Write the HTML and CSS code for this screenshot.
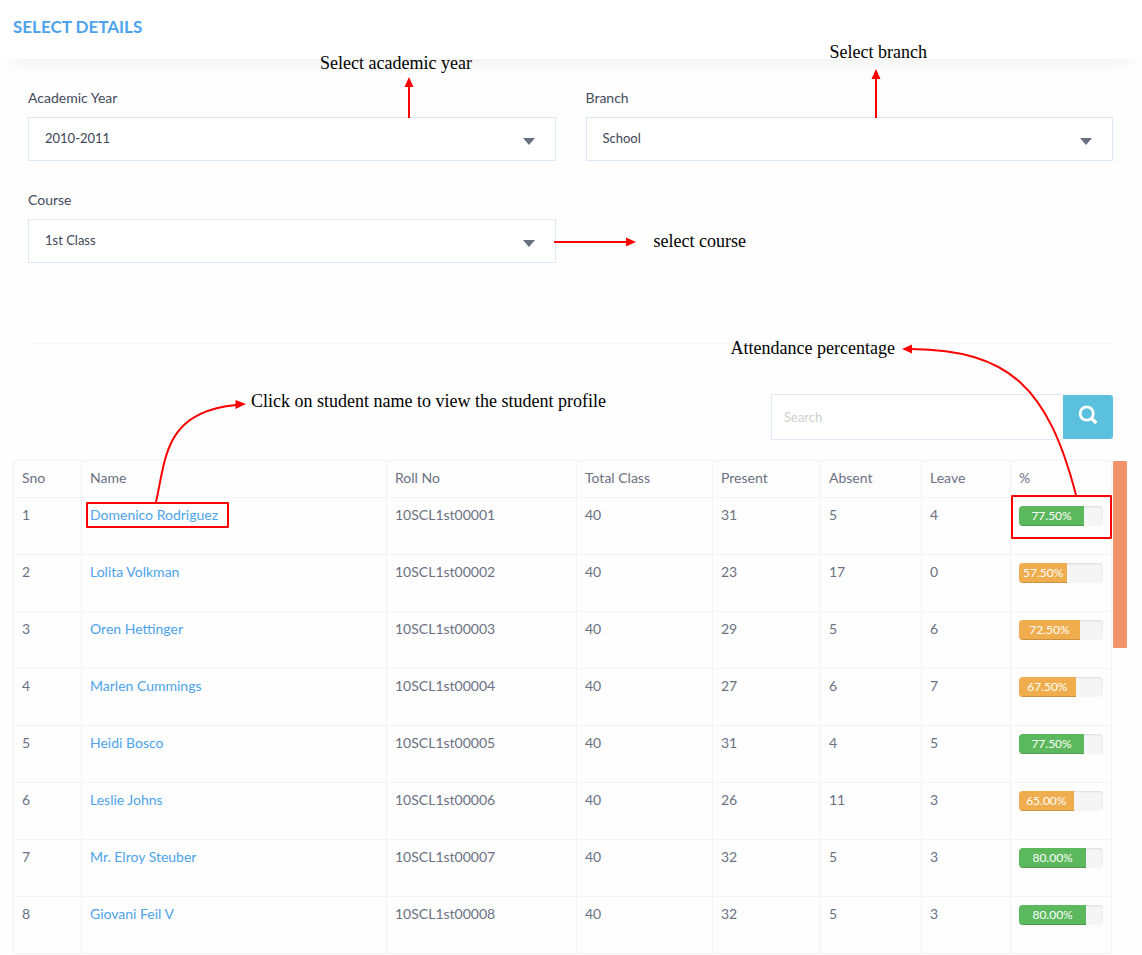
FILE: index.html
```html
<!DOCTYPE html>
<html lang="en">
<head>
<meta charset="utf-8">
<title>Select Details</title>
<link rel="stylesheet" href="styles.css">
</head>
<body>
<header class="page-header"><h1 class="page-title">SELECT DETAILS</h1></header>
<main>
<form class="filters">
  <div class="field">
    <label for="year">Academic Year</label>
    <div class="select-box">
      <select id="year"><option>2010-2011</option></select>
      <span class="note note-year">Select academic year</span>
      <svg class="arrow arrow-year" width="10" height="41" viewBox="0 0 10 41"><path d="M5 41V9" class="stroke"/><path d="M5 0L9.500 10H.5z" class="head"/></svg>
    </div>
  </div>
  <div class="field">
    <label for="branch">Branch</label>
    <div class="select-box">
      <select id="branch"><option>School</option></select>
      <span class="note note-branch">Select branch</span>
      <svg class="arrow arrow-branch" width="10" height="49" viewBox="0 0 10 49"><path d="M5 49V9" class="stroke"/><path d="M5 0L9.500 10H.5z" class="head"/></svg>
    </div>
  </div>
  <div class="field">
    <label for="course">Course</label>
    <div class="select-box">
      <select id="course"><option>1st Class</option></select>
      <span class="note note-course">select course</span>
      <svg class="arrow arrow-course" width="82" height="10" viewBox="0 0 82 10"><path d="M0 5H73" class="stroke"/><path d="M82 5L72 .5V9.500z" class="head"/></svg>
    </div>
  </div>
</form>
<hr class="divider">
<form class="search">
  <input type="search" placeholder="Search" aria-label="Search">
  <button type="button" aria-label="Search"><svg width="20" height="20" viewBox="0 0 20 20"><circle cx="8.700" cy="8.500" r="6.600" fill="none" stroke="#fff" stroke-width="2.800"/><path d="M13.300 13.200L18.300 18" stroke="#fff" stroke-width="3.400"/></svg></button>
</form>
<div class="results">
<table class="attendance">
<colgroup><col class="c-sno"><col><col class="c-roll"><col class="c-total"><col class="c-present"><col class="c-absent"><col class="c-leave"><col class="c-percent"></colgroup>
<thead><tr><th>Sno</th><th>Name</th><th>Roll No</th><th>Total Class</th><th>Present</th><th>Absent</th><th>Leave</th><th>%</th></tr></thead>
<tbody>
<tr><td>1</td><td><div class="anchor"><a href="#s1">Domenico Rodriguez</a><span class="frame frame-name"></span><svg class="arrow arrow-name" width="96" height="104" viewBox="150 398 96 104"><path d="M156 502C166 458 164 412 236 405" class="stroke"/><path d="M246 404L235.500 400V409z" class="head"/></svg><span class="note note-name">Click on student name to view the student profile</span></div></td><td>10SCL1st00001</td><td>40</td><td>31</td><td>5</td><td>4</td><td><div class="anchor"><div class="progress"><div class="bar good" style="width:77.5%">77.50%</div></div><span class="frame frame-percent"></span><svg class="arrow arrow-percent" width="178" height="155" viewBox="902 340 178 155"><path d="M1076 495C1048 388 1010 350 911 349" class="stroke"/><path d="M902 349L912 344.500V353.500z" class="head"/></svg><span class="note note-percent">Attendance percentage</span></div></td></tr>
<tr><td>2</td><td><a href="#s2">Lolita Volkman</a></td><td>10SCL1st00002</td><td>40</td><td>23</td><td>17</td><td>0</td><td><div class="progress"><div class="bar fair" style="width:57.5%">57.50%</div></div></td></tr>
<tr><td>3</td><td><a href="#s3">Oren Hettinger</a></td><td>10SCL1st00003</td><td>40</td><td>29</td><td>5</td><td>6</td><td><div class="progress"><div class="bar fair" style="width:72.5%">72.50%</div></div></td></tr>
<tr><td>4</td><td><a href="#s4">Marlen Cummings</a></td><td>10SCL1st00004</td><td>40</td><td>27</td><td>6</td><td>7</td><td><div class="progress"><div class="bar fair" style="width:67.5%">67.50%</div></div></td></tr>
<tr><td>5</td><td><a href="#s5">Heidi Bosco</a></td><td>10SCL1st00005</td><td>40</td><td>31</td><td>4</td><td>5</td><td><div class="progress"><div class="bar good" style="width:77.5%">77.50%</div></div></td></tr>
<tr><td>6</td><td><a href="#s6">Leslie Johns</a></td><td>10SCL1st00006</td><td>40</td><td>26</td><td>11</td><td>3</td><td><div class="progress"><div class="bar fair" style="width:65%">65.00%</div></div></td></tr>
<tr><td>7</td><td><a href="#s7">Mr. Elroy Steuber</a></td><td>10SCL1st00007</td><td>40</td><td>32</td><td>5</td><td>3</td><td><div class="progress"><div class="bar good" style="width:80%">80.00%</div></div></td></tr>
<tr><td>8</td><td><a href="#s8">Giovani Feil V</a></td><td>10SCL1st00008</td><td>40</td><td>32</td><td>5</td><td>3</td><td><div class="progress"><div class="bar good" style="width:80%">80.00%</div></div></td></tr>
</tbody>
</table>
<div class="scroll-thumb"></div>
</div>
</main>
</body>
</html>
```
FILE: styles.css
```css
* { box-sizing: border-box; }
body {
  margin: 0;
  background: #fefefe;
  color: #6b7182;
  font: 14px/20px Lato, "Open Sans", sans-serif;
}
.page-header {
  padding: 17px 13px 22px;
  background: #fff;
  box-shadow: 0 16px 16px -12px rgba(0, 0, 0, .06);
}
.page-title {
  margin: 0;
  color: #4da3ec;
  font-size: 17px;
  line-height: 20px;
  font-weight: 700;
}
.filters {
  display: grid;
  grid-template-columns: 1fr 1fr;
  gap: 29px 30px;
  padding: 29px 29px 0 28px;
}
.field { display: grid; gap: 9px; color: #444b5c; }
.select-box { position: relative; }
.select-box::after {
  content: "";
  position: absolute;
  right: 21px;
  top: 21px;
  border: 6px solid transparent;
  border-top: 7px solid #677080;
  border-bottom: 0;
  pointer-events: none;
}
select {
  display: block;
  width: 100%;
  height: 44px;
  padding: 0 40px 2px 16px;
  border: 1px solid #dfe6f5;
  border-radius: 0;
  background: #fff;
  color: #3e4556;
  font: 13px/20px Lato, "Open Sans", sans-serif;
  appearance: none;
}
.divider {
  height: 1px;
  margin: 80px 29px 50px 28px;
  border: 0;
  background: #f7f7f7;
}
.search {
  display: flex;
  align-items: center;
  justify-content: flex-end;
  margin: 0 29px 20px 0;
}
.search input {
  width: 292px;
  height: 46px;
  padding: 0 12px;
  border: 1px solid #dfe6f5;
  border-right: 0;
  border-radius: 0;
  background: #fff;
  font: 13px/20px Lato, "Open Sans", sans-serif;
  appearance: none;
}
.search input::placeholder { color: #cfcfcf; opacity: 1; }
.search button {
  display: grid;
  place-items: center;
  width: 50px;
  height: 44px;
  padding: 0 0 4px;
  border: 0;
  border-radius: 0 3px 3px 0;
  background: #5bc0de;
}
.results { display: flex; align-items: flex-start; gap: 1px; padding: 0 15px 0 13px; }
.attendance {
  flex: 1;
  border-collapse: collapse;
  table-layout: fixed;
}
.c-sno { width: 68px; }
.c-roll { width: 190px; }
.c-total { width: 136px; }
.c-present { width: 108px; }
.c-absent { width: 101px; }
.c-leave { width: 89px; }
.c-percent { width: 101px; }
th, td {
  padding: 7px 8px 9px;
  border: 1px solid #f3f3f3;
  font-weight: 400;
  text-align: left;
  vertical-align: top;
}
a { color: #4da3ec; text-decoration: none; }
.anchor { position: relative; display: flow-root; }
.progress {
  height: 20px;
  margin: 1px 0 19px;
  overflow: hidden;
  border-radius: 4px;
  background: #f5f5f5;
  box-shadow: inset 0 1px 2px rgba(0, 0, 0, .1);
}
.bar {
  height: 20px;
  color: #fff;
  font-size: 12px;
  text-align: center;
  box-shadow: inset 0 -1px 0 rgba(0, 0, 0, .15);
}
.good { background: #5cb85c; }
.fair { background: #f0ad4e; }
.scroll-thumb {
  flex: none;
  width: 14px;
  height: 187px;
  margin-top: 1px;
  border-radius: 1px;
  background: #f3936c;
}

/* Annotations over the controls they explain */
.note {
  position: absolute;
  color: #000;
  font: 18px/20px "Liberation Serif", serif;
  white-space: nowrap;
}
.arrow { position: absolute; pointer-events: none; }
.stroke { fill: none; stroke: #f00; stroke-width: 2; }
.head { fill: #f00; }
.frame { position: absolute; border: 2px solid #f00; border-radius: 1px; pointer-events: none; }
.note-year { left: 292px; top: -64px; }
.arrow-year { left: 376px; top: -40px; }
.note-branch { left: 244px; top: -75px; }
.arrow-branch { left: 285px; top: -48px; }
.note-course { left: calc(100% + 98px); top: 12px; }
.arrow-course { left: calc(100% - 2px); top: 18px; }
.frame-name { left: -4px; top: -3px; width: 143px; height: 26px; }
.arrow-name { left: 60px; top: -107px; }
.note-name { left: 161px; top: -114px; }
.frame-percent { left: -8px; top: -10px; width: 101px; height: 44px; }
.arrow-percent { right: 23px; top: -165px; }
.note-percent { right: 208px; top: -167px; }
```
